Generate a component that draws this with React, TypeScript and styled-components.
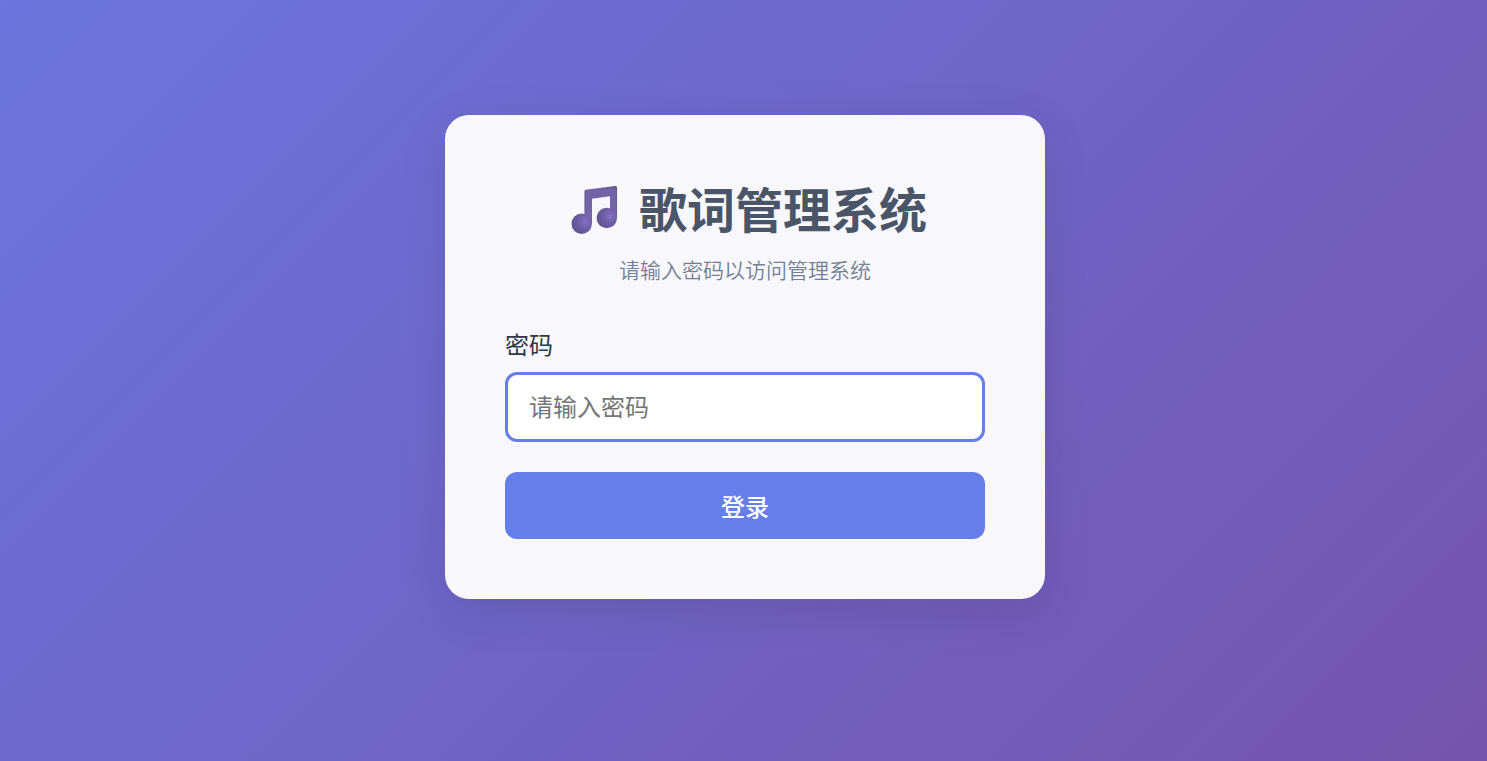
import React, { useState } from "react";
import styled, { createGlobalStyle } from "styled-components";

const GlobalStyle = createGlobalStyle`
  *, *::before, *::after { box-sizing: border-box; }
  body {
    margin: 0;
    font-family: "Noto Sans CJK SC", sans-serif;
    font-size: 24px;
    color: #2d3748;
  }
  button, input { font: inherit; }
`;

const Page = styled.main`
  min-height: 100vh;
  display: flex;
  align-items: center;
  justify-content: center;
  padding: 0 0 48px 3px;
  background: linear-gradient(135deg, #6a75dd 0%, #7554af 100%);
`;

const Card = styled.section`
  width: 100%;
  max-width: 600px;
  padding: 60px;
  border-radius: 24px;
  background: #f8f7fc;
  box-shadow: 0 12px 48px rgba(0, 0, 0, 0.1);
`;

const Header = styled.header`
  margin-bottom: 41px;
  text-align: center;
`;

const Title = styled.h1`
  display: flex;
  align-items: center;
  justify-content: center;
  gap: 16px;
  margin: 0 0 14px;
  font-size: 48px;
  line-height: 64px;
  font-weight: 700;
  color: #4a5568;
`;

const Subtitle = styled.p`
  margin: 0;
  font-size: 21px;
  line-height: 32px;
  font-weight: 350;
  color: #718096;
`;

const Form = styled.form`
  display: flex;
  flex-direction: column;
`;

const Label = styled.label`
  margin-bottom: 10px;
  line-height: 36px;
`;

const PasswordInput = styled.input`
  width: 100%;
  height: 70px;
  margin-bottom: 30px;
  padding: 0 21px 2px;
  border: 3px solid #667eea;
  border-radius: 12px;
  outline: none;
  background: #fff;
  color: #2d3748;

  &::placeholder { color: #757575; opacity: 1; }
`;

const SubmitButton = styled.button`
  height: 67px;
  border: 0;
  border-radius: 12px;
  background: #667eea;
  color: #fff;
  font-weight: 500;
  cursor: pointer;
`;

function MusicNotes() {
  return (
    <svg width="60" height="60" viewBox="-1 -4 60 60" aria-hidden="true">
      <defs>
        <radialGradient id="head" cx="0.68" cy="0.4" r="0.7">
          <stop offset="0" stopColor="#8470c4" />
          <stop offset="0.5" stopColor="#6e5fa6" />
          <stop offset="1" stopColor="#5f5191" />
        </radialGradient>
        <linearGradient id="beam" x1="0" y1="0" x2="0" y2="1">
          <stop offset="0" stopColor="#5f5090" />
          <stop offset="0.1" stopColor="#7263a6" />
          <stop offset="1" stopColor="#7667ac" />
        </linearGradient>
      </defs>
      <path
        d="M20.5 10.2Q20.5 8.9 21.8 8.7L51.4 5.1Q53 5 53 6.4V37H46V15.3L28 17.8V42.7H20.5Z"
        fill="url(#beam)"
      />
      <path d="M21.2 10V38M52.6 7V33" stroke="#63558f" strokeWidth="1" opacity="0.55" />
      <circle cx="17.7" cy="42.7" r="10.2" fill="url(#head)" />
      <circle cx="42.8" cy="37" r="10.2" fill="url(#head)" />
    </svg>
  );
}

export default function App() {
  const [password, setPassword] = useState("");

  return (
    <>
      <GlobalStyle />
      <Page>
        <Card>
          <Header>
            <Title>
              <MusicNotes />
              歌词管理系统
            </Title>
            <Subtitle>请输入密码以访问管理系统</Subtitle>
          </Header>
          <Form onSubmit={(event) => event.preventDefault()}>
            <Label htmlFor="password">密码</Label>
            <PasswordInput
              id="password"
              type="password"
              placeholder="请输入密码"
              value={password}
              onChange={(event) => setPassword(event.target.value)}
            />
            <SubmitButton type="submit">登录</SubmitButton>
          </Form>
        </Card>
      </Page>
    </>
  );
}
